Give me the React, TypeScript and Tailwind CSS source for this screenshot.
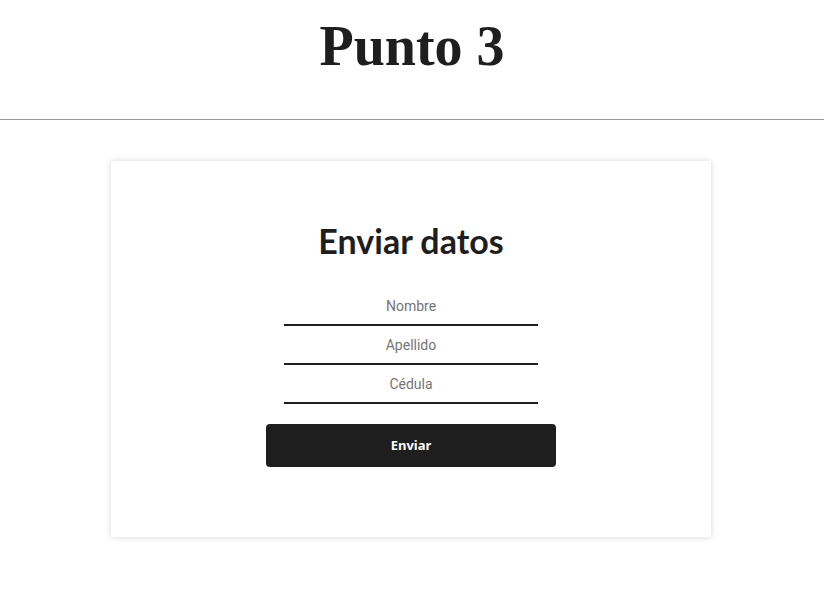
export default function App() {
  return (
    <div className="min-h-screen bg-white">
      {/* Header */}
      <h1 className="pt-[14px] pb-[41px] text-center text-[56px] font-bold leading-[64px] text-[#1e1e1e] [font-family:'Liberation_Serif',serif]">
        Punto 3
      </h1>
      <hr className="border-0 border-t border-[#999999]" />

      {/* Card */}
      <div className="flex justify-center pt-[41px] pr-[2px]">
        <form className="flex w-[600px] h-[376px] flex-col items-center bg-white pt-[58px] shadow-[0_0_6px_rgba(0,0,0,0.16)]">
          <h2 className="text-[34px] font-bold leading-[44px] text-[#1e1e1e] [font-family:Lato,sans-serif]">
            Enviar datos
          </h2>

          <div className="mt-[24px] flex w-[254px] flex-col">
            {['Nombre', 'Apellido', 'Cédula'].map((p) => (
              <input
                key={p}
                placeholder={p}
                className="h-[39px] w-full border-b-2 border-[#1e1e1e] bg-transparent text-center text-[14px] text-[#1e1e1e] outline-none placeholder:text-[#757575] [font-family:Roboto,sans-serif]"
              />
            ))}
          </div>

          <button
            type="button"
            className="mt-[20px] h-[43px] w-[290px] rounded-[4px] bg-[#1e1e1e] text-[13px] font-bold text-white [font-family:'Noto_Sans',sans-serif]"
          >
            Enviar
          </button>
        </form>
      </div>
    </div>
  );
}
